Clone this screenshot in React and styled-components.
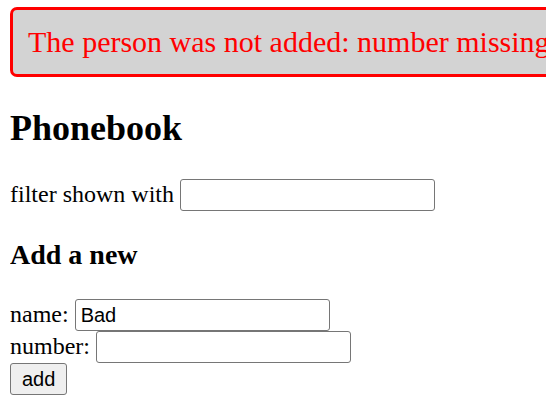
import styled, { createGlobalStyle } from 'styled-components';

const GlobalStyle = createGlobalStyle`
  html, body {
    overflow: hidden;
  }

  body {
    margin: 7px 10px;
    background: #ffffff;
    color: #000000;
    font-family: "Liberation Serif", "Times New Roman", serif;
    font-size: 24px;
  }
`;

const Page = styled.div`
  width: 620px;
`;

const Notification = styled.div`
  color: red;
  background: lightgrey;
  font-size: 30px;
  border: 3px solid red;
  border-radius: 7px;
  padding: 15px 15px;
  margin-bottom: 15px;
`;

const Title = styled.h2`
  font-size: 36px;
  margin: 30px 0;
`;

const Subtitle = styled.h3`
  font-size: 28px;
  margin: 28px 0;
`;

const Row = styled.div`
  line-height: 1.15;
`;

const Input = styled.input`
  box-sizing: border-box;
  width: 255px;
  height: 32px;
  padding: 1px 5px;
  margin: 0;
  border: 1px solid #767676;
  border-radius: 3px;
  font-family: "Liberation Sans", Arial, sans-serif;
  font-size: 20px;
  color: #000000;
  vertical-align: baseline;
`;

const Button = styled.button`
  box-sizing: border-box;
  height: 32px;
  padding: 0 11px;
  margin: 0;
  border: 1px solid #767676;
  border-radius: 3px;
  background: #efefef;
  font-family: "Liberation Sans", Arial, sans-serif;
  font-size: 20px;
  color: #000000;
`;

const App = () => {
    return (
        <Page>
            <GlobalStyle/>
            <Notification>The person was not added: number missing</Notification>
            <Title>Phonebook</Title>
            <Row>filter shown with <Input/></Row>
            <Subtitle>Add a new</Subtitle>
            <form onSubmit={e => e.preventDefault()}>
                <Row>name: <Input defaultValue="Bad"/></Row>
                <Row>number: <Input/></Row>
                <Row><Button type="submit">add</Button></Row>
            </form>
        </Page>
    );
};

export default App;
